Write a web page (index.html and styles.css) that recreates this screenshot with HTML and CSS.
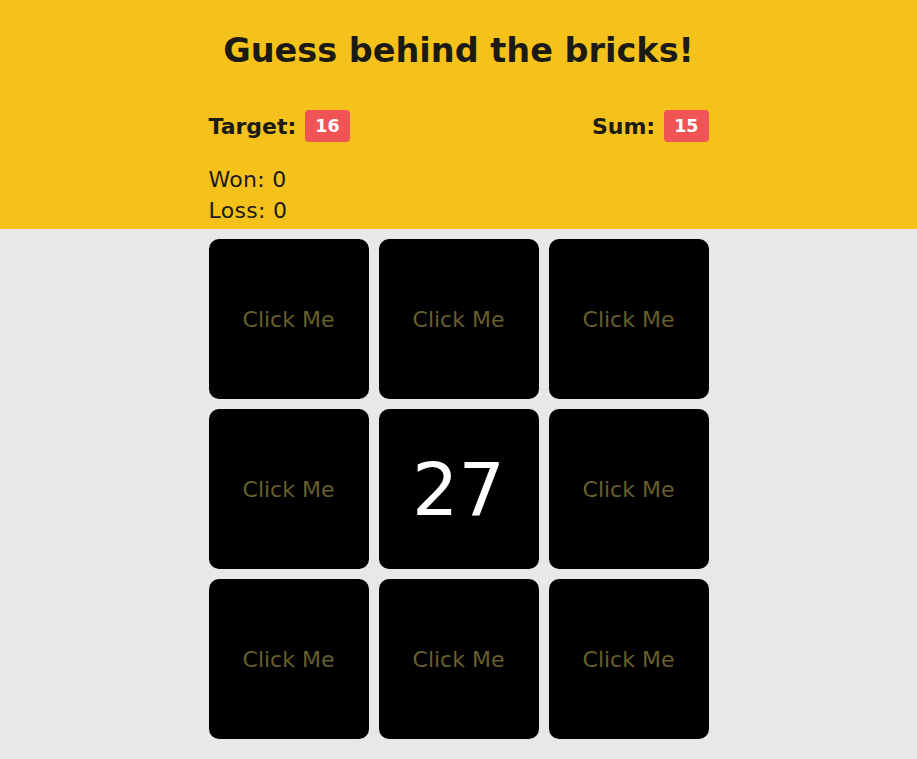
FILE: index.html
```html
<!DOCTYPE html>
<html>
<head>
<meta charset="utf-8">
<link rel="stylesheet" href="styles.css">
</head>
<body>
<header class="header">
  <h1 class="title">Guess behind the bricks!</h1>
  <div class="inner">
    <div class="scores">
      <div class="score"><span class="label">Target:</span> <span class="badge">16</span></div>
      <div class="score"><span class="label">Sum:</span> <span class="badge">15</span></div>
    </div>
    <div class="stats">
      <div>Won: 0</div>
      <div>Loss: 0</div>
    </div>
  </div>
</header>
<main class="grid">
  <div class="tile">Click Me</div>
  <div class="tile">Click Me</div>
  <div class="tile">Click Me</div>
  <div class="tile">Click Me</div>
  <div class="tile open">27</div>
  <div class="tile">Click Me</div>
  <div class="tile">Click Me</div>
  <div class="tile">Click Me</div>
  <div class="tile">Click Me</div>
</main>
</body>
</html>
```
FILE: styles.css
```css
html, body {
  margin: 0;
  padding: 0;
  background: #e8e8e8;
  font-family: "DejaVu Sans", Verdana, sans-serif;
  color: #1c1a14;
}
.header {
  background: #f5c21b;
  padding: 29px 0 3px;
}
.title {
  margin: 0;
  text-align: center;
  font-size: 33.5px;
  font-weight: bold;
  line-height: 43px;
}
.inner {
  width: 500px;
  margin: 0 auto;
}
.scores {
  display: flex;
  justify-content: space-between;
  align-items: center;
  margin-top: 38px;
  height: 32px;
}
.score {
  display: flex;
  align-items: center;
  gap: 9px;
}
.label {
  font-weight: bold;
  font-size: 22px;
}
.badge {
  background: #f15454;
  color: #fff;
  font-weight: bold;
  font-size: 17.5px;
  border-radius: 4px;
  height: 32px;
  line-height: 33px;
  padding: 0 10px;
}
.stats {
  margin-top: 22px;
  font-size: 22px;
  line-height: 31px;
  letter-spacing: 0.3px;
}
.grid {
  width: 500px;
  margin: 10px auto 0;
  display: grid;
  grid-template-columns: repeat(3, 160px);
  grid-auto-rows: 160px;
  gap: 10px;
}
.tile {
  background: #000;
  border-radius: 10px;
  display: flex;
  align-items: center;
  justify-content: center;
  color: #675f2c;
  font-size: 22px;
}
.tile.open {
  color: #fff;
  font-size: 73px;
}
```
